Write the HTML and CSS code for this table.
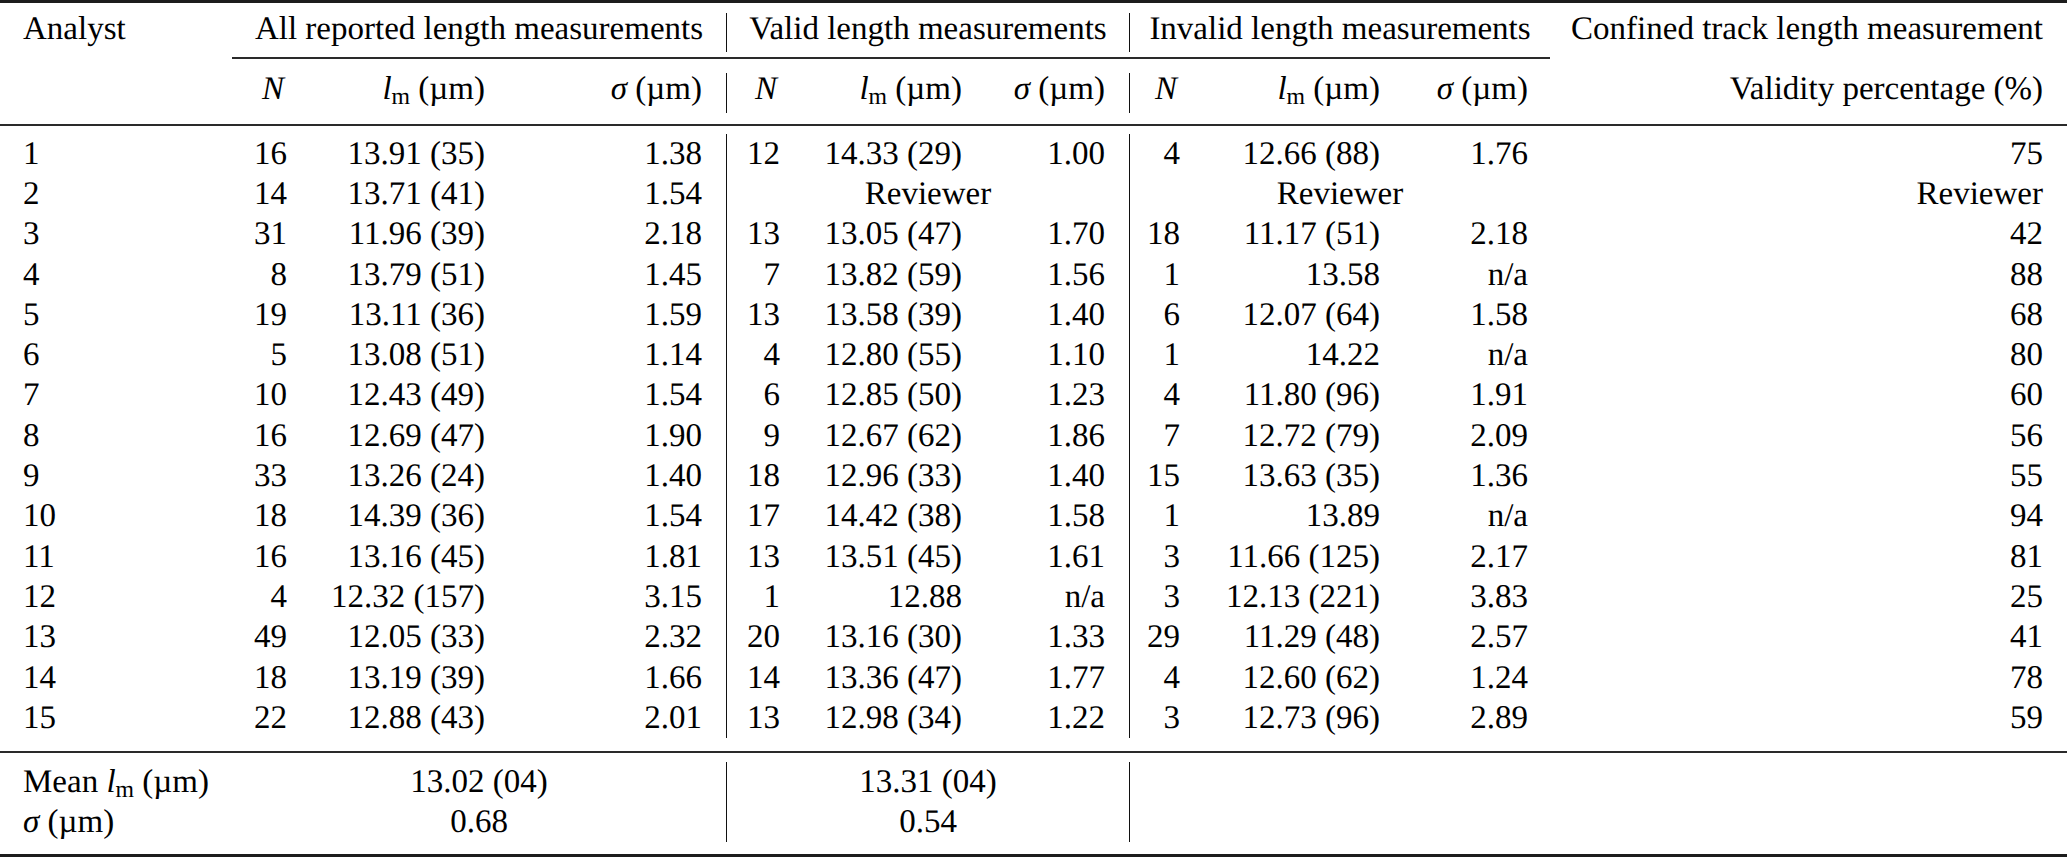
FILE: index.html
```html
<!DOCTYPE html>
<html lang="en">
<head>
<meta charset="utf-8">
<title>Confined track length measurements</title>
<link rel="stylesheet" href="styles.css">
</head>
<body>
<div class="tbl" role="table">
  <div class="rule top"></div>

  <div class="row hrow1" role="row">
    <span class="a">Analyst</span>
    <span class="span3">All reported length measurements</span>
    <span class="span3 vl">Valid length measurements</span>
    <span class="span3 vl">Invalid length measurements</span>
    <span class="pct">Confined track length measurement</span>
  </div>

  <div class="cmid"></div>

  <div class="row hrow2" role="row">
    <span class="a"></span>
    <span class="n hn"><i>N</i></span>
    <span class="lm"><i>l</i><sub>m</sub> (µm)</span>
    <span class="sd"><i>σ</i> (µm)</span>
    <span class="n hn vl"><i>N</i></span>
    <span class="lm"><i>l</i><sub>m</sub> (µm)</span>
    <span class="sd"><i>σ</i> (µm)</span>
    <span class="n hn vl"><i>N</i></span>
    <span class="lm"><i>l</i><sub>m</sub> (µm)</span>
    <span class="sd g3"><i>σ</i> (µm)</span>
    <span class="pct">Validity percentage (%)</span>
  </div>

  <div class="rule mid"></div>

  <div class="body" role="rowgroup">
    <div class="row" role="row"><span class="a">1</span><span class="n">16</span><span class="lm">13.91 (35)</span><span class="sd">1.38</span><span class="n vl">12</span><span class="lm">14.33 (29)</span><span class="sd">1.00</span><span class="n vl">4</span><span class="lm">12.66 (88)</span><span class="sd g3">1.76</span><span class="pct">75</span></div>
    <div class="row" role="row"><span class="a">2</span><span class="n">14</span><span class="lm">13.71 (41)</span><span class="sd">1.54</span><span class="span3 vl">Reviewer</span><span class="span3 vl">Reviewer</span><span class="pct">Reviewer</span></div>
    <div class="row" role="row"><span class="a">3</span><span class="n">31</span><span class="lm">11.96 (39)</span><span class="sd">2.18</span><span class="n vl">13</span><span class="lm">13.05 (47)</span><span class="sd">1.70</span><span class="n vl">18</span><span class="lm">11.17 (51)</span><span class="sd g3">2.18</span><span class="pct">42</span></div>
    <div class="row" role="row"><span class="a">4</span><span class="n">8</span><span class="lm">13.79 (51)</span><span class="sd">1.45</span><span class="n vl">7</span><span class="lm">13.82 (59)</span><span class="sd">1.56</span><span class="n vl">1</span><span class="lm">13.58</span><span class="sd g3">n/a</span><span class="pct">88</span></div>
    <div class="row" role="row"><span class="a">5</span><span class="n">19</span><span class="lm">13.11 (36)</span><span class="sd">1.59</span><span class="n vl">13</span><span class="lm">13.58 (39)</span><span class="sd">1.40</span><span class="n vl">6</span><span class="lm">12.07 (64)</span><span class="sd g3">1.58</span><span class="pct">68</span></div>
    <div class="row" role="row"><span class="a">6</span><span class="n">5</span><span class="lm">13.08 (51)</span><span class="sd">1.14</span><span class="n vl">4</span><span class="lm">12.80 (55)</span><span class="sd">1.10</span><span class="n vl">1</span><span class="lm">14.22</span><span class="sd g3">n/a</span><span class="pct">80</span></div>
    <div class="row" role="row"><span class="a">7</span><span class="n">10</span><span class="lm">12.43 (49)</span><span class="sd">1.54</span><span class="n vl">6</span><span class="lm">12.85 (50)</span><span class="sd">1.23</span><span class="n vl">4</span><span class="lm">11.80 (96)</span><span class="sd g3">1.91</span><span class="pct">60</span></div>
    <div class="row" role="row"><span class="a">8</span><span class="n">16</span><span class="lm">12.69 (47)</span><span class="sd">1.90</span><span class="n vl">9</span><span class="lm">12.67 (62)</span><span class="sd">1.86</span><span class="n vl">7</span><span class="lm">12.72 (79)</span><span class="sd g3">2.09</span><span class="pct">56</span></div>
    <div class="row" role="row"><span class="a">9</span><span class="n">33</span><span class="lm">13.26 (24)</span><span class="sd">1.40</span><span class="n vl">18</span><span class="lm">12.96 (33)</span><span class="sd">1.40</span><span class="n vl">15</span><span class="lm">13.63 (35)</span><span class="sd g3">1.36</span><span class="pct">55</span></div>
    <div class="row" role="row"><span class="a">10</span><span class="n">18</span><span class="lm">14.39 (36)</span><span class="sd">1.54</span><span class="n vl">17</span><span class="lm">14.42 (38)</span><span class="sd">1.58</span><span class="n vl">1</span><span class="lm">13.89</span><span class="sd g3">n/a</span><span class="pct">94</span></div>
    <div class="row" role="row"><span class="a">11</span><span class="n">16</span><span class="lm">13.16 (45)</span><span class="sd">1.81</span><span class="n vl">13</span><span class="lm">13.51 (45)</span><span class="sd">1.61</span><span class="n vl">3</span><span class="lm">11.66 (125)</span><span class="sd g3">2.17</span><span class="pct">81</span></div>
    <div class="row" role="row"><span class="a">12</span><span class="n">4</span><span class="lm">12.32 (157)</span><span class="sd">3.15</span><span class="n vl">1</span><span class="lm">12.88</span><span class="sd">n/a</span><span class="n vl">3</span><span class="lm">12.13 (221)</span><span class="sd g3">3.83</span><span class="pct">25</span></div>
    <div class="row" role="row"><span class="a">13</span><span class="n">49</span><span class="lm">12.05 (33)</span><span class="sd">2.32</span><span class="n vl">20</span><span class="lm">13.16 (30)</span><span class="sd">1.33</span><span class="n vl">29</span><span class="lm">11.29 (48)</span><span class="sd g3">2.57</span><span class="pct">41</span></div>
    <div class="row" role="row"><span class="a">14</span><span class="n">18</span><span class="lm">13.19 (39)</span><span class="sd">1.66</span><span class="n vl">14</span><span class="lm">13.36 (47)</span><span class="sd">1.77</span><span class="n vl">4</span><span class="lm">12.60 (62)</span><span class="sd g3">1.24</span><span class="pct">78</span></div>
    <div class="row" role="row"><span class="a">15</span><span class="n">22</span><span class="lm">12.88 (43)</span><span class="sd">2.01</span><span class="n vl">13</span><span class="lm">12.98 (34)</span><span class="sd">1.22</span><span class="n vl">3</span><span class="lm">12.73 (96)</span><span class="sd g3">2.89</span><span class="pct">59</span></div>
  </div>

  <div class="rule mid2"></div>

  <div class="foot" role="rowgroup">
    <div class="row" role="row"><span class="a">Mean <i>l</i><sub>m</sub> (µm)</span><span class="span3">13.02 (04)</span><span class="span3 vl">13.31 (04)</span><span class="span3 vl"></span><span class="pct"></span></div>
    <div class="row" role="row"><span class="a"><i>σ</i> (µm)</span><span class="span3">0.68</span><span class="span3 vl">0.54</span><span class="span3 vl"></span><span class="pct"></span></div>
  </div>

  <div class="rule bottom"></div>
</div>
</body>
</html>
```

FILE: styles.css
```css
html, body {
  margin: 0;
  padding: 0;
  background: #fff;
}

body {
  font-family: "Liberation Serif", "Times New Roman", serif;
  font-size: 33px;
  color: #000;
  width: 2067px;
  height: 857px;
  overflow: hidden;
  text-rendering: geometricPrecision;
}

.tbl {
  display: flex;
  flex-direction: column;
  width: 2067px;
}

.row {
  display: grid;
  grid-template-columns: 232px 75px 198px 221px 74px 182px 147px 71px 200px 150px 517px;
  line-height: 40.3px;
  white-space: nowrap;
}

.row > span {
  text-align: right;
}

.row > .a {
  text-align: left;
  padding-left: 23px;
}

.n,
.lm {
  padding-right: 20px;
}

.sd {
  padding-right: 24px;
}

.sd.g3 {
  padding-right: 22px;
}

.pct {
  padding-right: 24px;
}

.row > .span3 {
  grid-column: span 3;
  text-align: center;
}

.vl {
  border-left: 1px solid #111;
}

.hn {
  padding-right: 23px;
}

i {
  font-style: italic;
}

sub {
  font-size: 0.72em;
  vertical-align: -0.2em;
  line-height: 0;
}

/* header bands */
.hrow1,
.hrow2 {
  line-height: 32px;
}

.hrow1 > span {
  padding-bottom: 7px;
}

.hrow2 > span {
  padding-bottom: 8px;
}

/* rules */
.rule {
  width: 100%;
  background: #1c1c1c;
}

.top {
  height: 3px;
  margin-bottom: 9.85px;
}

.cmid {
  margin-left: 232px;
  width: 1318px;
  height: 2px;
  background: #2a2a2a;
  margin-top: 5.15px;
  margin-bottom: 13.85px;
}

.mid {
  height: 2px;
  background: #2a2a2a;
  margin-top: 11.15px;
  margin-bottom: 7.7px;
}

.mid2 {
  height: 2px;
  background: #2a2a2a;
  margin-top: 12.8px;
  margin-bottom: 8.7px;
}

.bottom {
  height: 3px;
  margin-top: 11.7px;
}
```
